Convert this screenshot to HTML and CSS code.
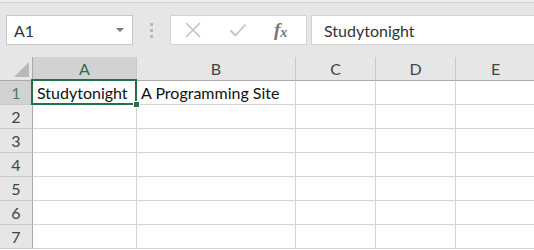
FILE: index.html
```html
<!DOCTYPE html>
<html>
<head>
    <meta charset="UTF-8">
    <title>Studytonight sheet</title>
    <link rel="stylesheet" href="styles.css">
</head>
<body>
<div class="toolbar">
    <div class="namebox">
        <span>A1</span>
        <span class="caret"></span>
    </div>
    <div class="grip"><i></i><i></i><i></i></div>
    <div class="fx-buttons">
        <svg class="btn-icon" width="18" height="18" viewBox="0 0 18 18">
            <path d="M2 2 L16 16 M16 2 L2 16" stroke="#c3c3c3" stroke-width="1.6" fill="none"/>
        </svg>
        <svg class="btn-icon" width="18" height="18" viewBox="0 0 18 18">
            <path d="M1.5 9.5 L6.5 14.5 L16.5 3.5" stroke="#c3c3c3" stroke-width="1.8" fill="none"/>
        </svg>
        <span class="fx">f<sub>x</sub></span>
    </div>
    <div class="formula">Studytonight</div>
</div>

<div class="sheet">
    <div class="corner"><span class="tri"></span></div>
    <div class="col-head active">A</div>
    <div class="col-head">B</div>
    <div class="col-head">C</div>
    <div class="col-head">D</div>
    <div class="col-head">E</div>

    <div class="row-head active">1</div>
    <div class="cell selected">Studytonight</div>
    <div class="cell">A Programming Site</div>
    <div class="cell"></div>
    <div class="cell"></div>
    <div class="cell"></div>

    <div class="row-head">2</div>
    <div class="cell"></div><div class="cell"></div><div class="cell"></div><div class="cell"></div><div class="cell"></div>

    <div class="row-head">3</div>
    <div class="cell"></div><div class="cell"></div><div class="cell"></div><div class="cell"></div><div class="cell"></div>

    <div class="row-head">4</div>
    <div class="cell"></div><div class="cell"></div><div class="cell"></div><div class="cell"></div><div class="cell"></div>

    <div class="row-head">5</div>
    <div class="cell"></div><div class="cell"></div><div class="cell"></div><div class="cell"></div><div class="cell"></div>

    <div class="row-head">6</div>
    <div class="cell"></div><div class="cell"></div><div class="cell"></div><div class="cell"></div><div class="cell"></div>

    <div class="row-head">7</div>
    <div class="cell"></div><div class="cell"></div><div class="cell"></div><div class="cell"></div><div class="cell"></div>
</div>
</body>
</html>
```

FILE: styles.css
```css
body {
    margin: 0;
    width: 534px;
    height: 250px;
    overflow: hidden;
    background: #fff;
    font-family: Lato, "Open Sans", sans-serif;
    color: #222;
}

.toolbar {
    box-sizing: border-box;
    height: 57px;
    background: linear-gradient(#eeeeee 0 2px, #d2d2d2 2px 3px, #e6e6e6 3px);
    display: flex;
    align-items: flex-start;
    padding: 15px 0 0 6px;
}

.namebox {
    box-sizing: border-box;
    width: 127px;
    height: 30px;
    background: #fff;
    border: 1px solid #c6c6c6;
    display: flex;
    align-items: center;
    justify-content: space-between;
    padding: 0 8px 0 7px;
    font-size: 16px;
    color: #333;
}

.caret {
    width: 0;
    height: 0;
    border-left: 4px solid transparent;
    border-right: 4px solid transparent;
    border-top: 4px solid #777;
}

.grip {
    width: 37px;
    height: 30px;
    display: flex;
    flex-direction: column;
    align-items: center;
    justify-content: center;
    gap: 3px;
}

.grip i {
    width: 3px;
    height: 3px;
    background: #b8b8b8;
}

.fx-buttons {
    box-sizing: border-box;
    width: 137px;
    height: 30px;
    background: #fff;
    border: 1px solid #d2d2d2;
    display: flex;
    align-items: center;
    padding: 0 0 0 13px;
    gap: 27px;
}

.fx {
    font-family: "Liberation Serif", serif;
    font-style: italic;
    font-weight: bold;
    font-size: 19px;
    color: #777;
}

.fx sub {
    font-size: 14px;
    vertical-align: -1px;
}

.formula {
    box-sizing: border-box;
    flex: 1;
    height: 30px;
    margin-left: 4px;
    background: #fff;
    border: 1px solid #d2d2d2;
    border-right: 0;
    padding: 0 0 0 12px;
    display: flex;
    align-items: center;
    font-size: 16px;
    color: #333;
}

.sheet {
    display: grid;
    grid-template-columns: 33px 104px 159px 80px 80px 80px;
    grid-template-rows: repeat(8, 24px);
    font-size: 16px;
}

.corner,
.col-head,
.row-head,
.cell {
    box-sizing: border-box;
    border-right: 1px solid #d4d4d4;
    border-bottom: 1px solid #d4d4d4;
}

.corner {
    background: #e6e6e6;
    border-bottom-color: #ababab;
    border-right-color: #ababab;
    position: relative;
}

.tri {
    position: absolute;
    right: 3px;
    bottom: 3px;
    width: 0;
    height: 0;
    border-left: 15px solid transparent;
    border-bottom: 15px solid #b9b9b9;
}

.col-head {
    background: #e6e6e6;
    border-right-color: #c8c8c8;
    border-bottom-color: #ababab;
    display: flex;
    align-items: center;
    justify-content: center;
    color: #444;
}

.row-head {
    background: #e6e6e6;
    border-right-color: #ababab;
    border-bottom-color: #c8c8c8;
    display: flex;
    align-items: center;
    justify-content: center;
    color: #444;
}

.col-head.active,
.row-head.active {
    background: #d2d2d2;
    color: #2f6a48;
}

.row-head.active {
    color: #4f7a60;
}

.cell {
    padding: 0 0 0 4px;
    display: flex;
    align-items: flex-end;
    line-height: 22px;
    white-space: nowrap;
    color: #111;
}

.selected {
    position: relative;
}

.selected::after {
    content: "";
    position: absolute;
    left: -2px;
    top: -2px;
    right: -1px;
    bottom: -1px;
    border: 2px solid #217346;
}

.selected::before {
    content: "";
    position: absolute;
    right: -4px;
    bottom: -4px;
    width: 5px;
    height: 5px;
    background: #217346;
    border: 1px solid #fff;
    z-index: 1;
}
```
